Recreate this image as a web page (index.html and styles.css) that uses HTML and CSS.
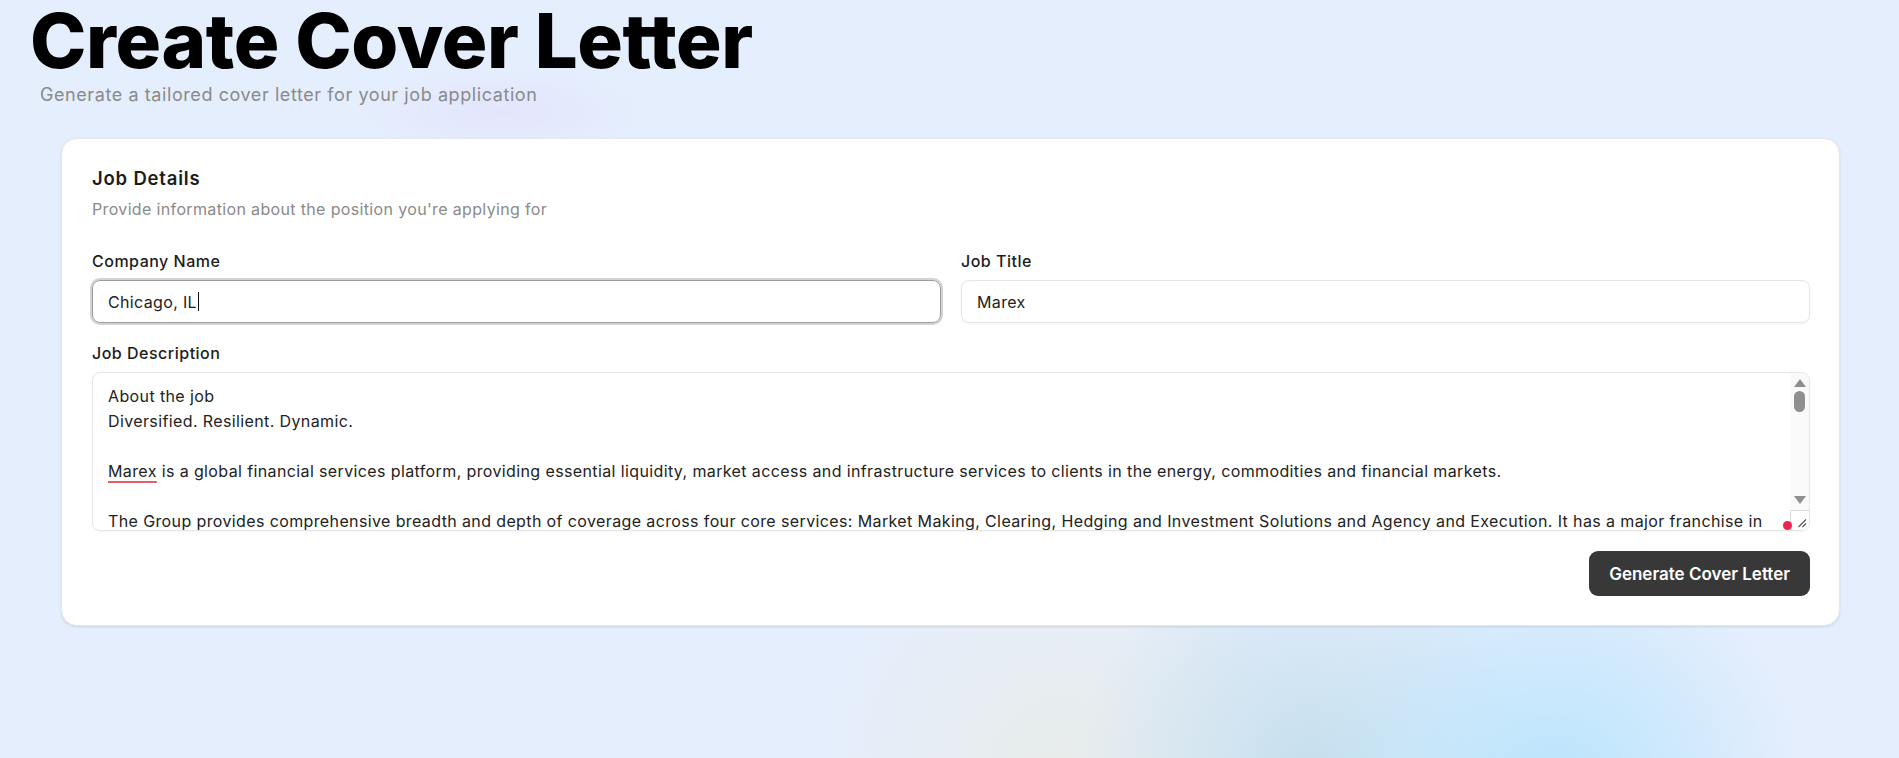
FILE: index.html
```html
<!DOCTYPE html>
<html lang="en">
<head>
<meta charset="utf-8">
<title>Create Cover Letter</title>
<link rel="stylesheet" href="styles.css">
</head>
<body>
<div class="page">
  <header class="header">
    <h1 class="title">Create Cover Letter</h1>
    <p class="subtitle">Generate a tailored cover letter for your job application</p>
  </header>

  <section class="card">
    <h2 class="card-title">Job Details</h2>
    <p class="card-desc">Provide information about the position you're applying for</p>

    <div class="row">
      <div class="field">
        <label class="label">Company Name</label>
        <div class="input focused">Chicago, IL<span class="caret"></span></div>
      </div>
      <div class="field">
        <label class="label">Job Title</label>
        <div class="input">Marex</div>
      </div>
    </div>

    <div class="field field-desc">
      <label class="label">Job Description</label>
      <div class="textarea">
        <div class="ta-text">About the job
Diversified. Resilient. Dynamic.

<span class="misspelled">Marex</span> is a global financial services platform, providing essential liquidity, market access and infrastructure services to clients in the energy, commodities and financial markets.

The Group provides comprehensive breadth and depth of coverage across four core services: Market Making, Clearing, Hedging and Investment Solutions and Agency and Execution. It has a major franchise in major metals, energy and agricultural products.</div>
        <div class="ta-scroll">
          <span class="arrow-up"></span>
          <span class="thumb"></span>
          <span class="track-fill"></span>
          <span class="arrow-down"></span>
          <span class="resizer">
            <svg width="10" height="10" viewBox="0 0 10 10"><path d="M1.5 9 L9 1.5 M5.5 9 L9 5.5" stroke="#555" stroke-width="1.1" fill="none"/></svg>
          </span>
        </div>
        <span class="dot"></span>
      </div>
    </div>

    <div class="actions">
      <button class="btn">Generate Cover Letter</button>
    </div>
  </section>
</div>
</body>
</html>
```

FILE: styles.css
```css
* { box-sizing: border-box; }

html, body {
  margin: 0;
  height: 100%;
}

body {
  font-family: Inter, "Noto Sans", "Liberation Sans", sans-serif;
  color: #1c1c1c;
  background:
    radial-gradient(ellipse 250px 250px at 1555px 790px, rgba(184, 228, 252, 1), rgba(184, 228, 252, 0) 100%),
    radial-gradient(ellipse 230px 240px at 1310px 770px, rgba(196, 222, 236, 0.95), rgba(196, 222, 236, 0) 100%),
    radial-gradient(ellipse 250px 250px at 1060px 770px, rgba(232, 236, 234, 1), rgba(232, 236, 234, 0) 100%),
    radial-gradient(ellipse 140px 45px at 500px 112px, rgba(226, 226, 252, 0.8), rgba(226, 226, 252, 0) 100%),
    #e5eefd;
  overflow: hidden;
}

.page {
  padding: 0 59px 0 61px;
}

.header {
  margin-left: -31px;
  padding-top: 2px;
}

.title {
  margin: 0;
  font-size: 76px;
  line-height: 76px;
  font-weight: 800;
  letter-spacing: -0.4px;
  color: #000;
}

.subtitle {
  margin: 5px 0 0 10px;
  font-size: 18px;
  line-height: 24px;
  letter-spacing: 0.58px;
  color: #8a8a8a;
}

.card {
  margin-top: 31px;
  background: #fff;
  border-radius: 16px;
  border: 1px solid #e4e9f1;
  box-shadow: 0 1px 3px rgba(0, 0, 0, 0.08), 0 1px 2px rgba(0, 0, 0, 0.04);
  padding: 29px 29px 29px 30px;
  display: flex;
  flex-direction: column;
}

.card-title {
  margin: 0;
  font-size: 18.5px;
  line-height: 20px;
  font-weight: 600;
  letter-spacing: 0.8px;
  color: #1c1c1c;
}

.card-desc {
  margin: 10px 0 0;
  font-size: 16px;
  line-height: 22px;
  letter-spacing: 0.35px;
  color: #8a8a8a;
}

.row {
  margin-top: 30px;
  display: flex;
  gap: 20px;
}

.field {
  flex: 1;
  display: flex;
  flex-direction: column;
}

.field-desc {
  margin-top: 19px;
}

.label {
  font-size: 16px;
  line-height: 22px;
  font-weight: 500;
  letter-spacing: 0.5px;
  color: #1c1c1c;
  margin-bottom: 8px;
}

.input {
  height: 43px;
  border: 1px solid #e6e6e6;
  border-radius: 8px;
  padding: 0 15px;
  display: flex;
  align-items: center;
  font-size: 16px;
  letter-spacing: 0.35px;
  color: #222;
  box-shadow: 0 1px 2px rgba(0, 0, 0, 0.05);
}

.input.focused {
  border-color: #9c9c9c;
  box-shadow: 0 0 0 2px #d3d3d3;
}

.caret {
  display: inline-block;
  width: 1px;
  height: 19px;
  background: #111;
  margin-left: 1px;
}

.textarea {
  position: relative;
  height: 159px;
  border: 1px solid #e6e6e6;
  border-radius: 8px;
  display: flex;
  overflow: hidden;
  box-shadow: 0 1px 2px rgba(0, 0, 0, 0.04);
}

.ta-text {
  flex: 1;
  padding: 11px 15px;
  font-size: 16px;
  line-height: 25px;
  letter-spacing: 0.38px;
  color: #222;
  white-space: pre-wrap;
  overflow: hidden;
}

.misspelled {
  text-decoration: underline;
  text-decoration-color: #e35d63;
  text-decoration-thickness: 2px;
  text-underline-offset: 4px;
}

.ta-scroll {
  width: 19px;
  background: #fafafa;
  display: flex;
  flex-direction: column;
  align-items: center;
}

.arrow-up {
  margin-top: 6px;
  width: 0;
  height: 0;
  border-left: 6px solid transparent;
  border-right: 6px solid transparent;
  border-bottom: 8px solid #8f8f8f;
}

.thumb {
  margin-top: 4px;
  width: 11px;
  height: 21px;
  border-radius: 6px;
  background: #8f8f8f;
}

.track-fill {
  flex: 1;
}

.arrow-down {
  margin-bottom: 6px;
  width: 0;
  height: 0;
  border-left: 6px solid transparent;
  border-right: 6px solid transparent;
  border-top: 8px solid #8f8f8f;
}

.resizer {
  align-self: stretch;
  height: 20px;
  background: #fff;
  border-top: 1px solid #dcdcdc;
  border-left: 1px solid #dcdcdc;
  display: flex;
  align-items: flex-end;
  justify-content: flex-end;
  padding: 0 2px 2px 0;
}

.resizer svg { display: block; }

.dot {
  position: absolute;
  right: 17px;
  bottom: 0;
  width: 9px;
  height: 9px;
  border-radius: 50%;
  background: #ee2250;
}

.actions {
  margin-top: 20px;
  display: flex;
  justify-content: flex-end;
}

.btn {
  height: 45px;
  padding: 0 20px;
  border: none;
  border-radius: 9px;
  background: #383838;
  color: #fff;
  font-family: Inter, "Noto Sans", "Liberation Sans", sans-serif;
  font-size: 17px;
  font-weight: 600;
}
```
